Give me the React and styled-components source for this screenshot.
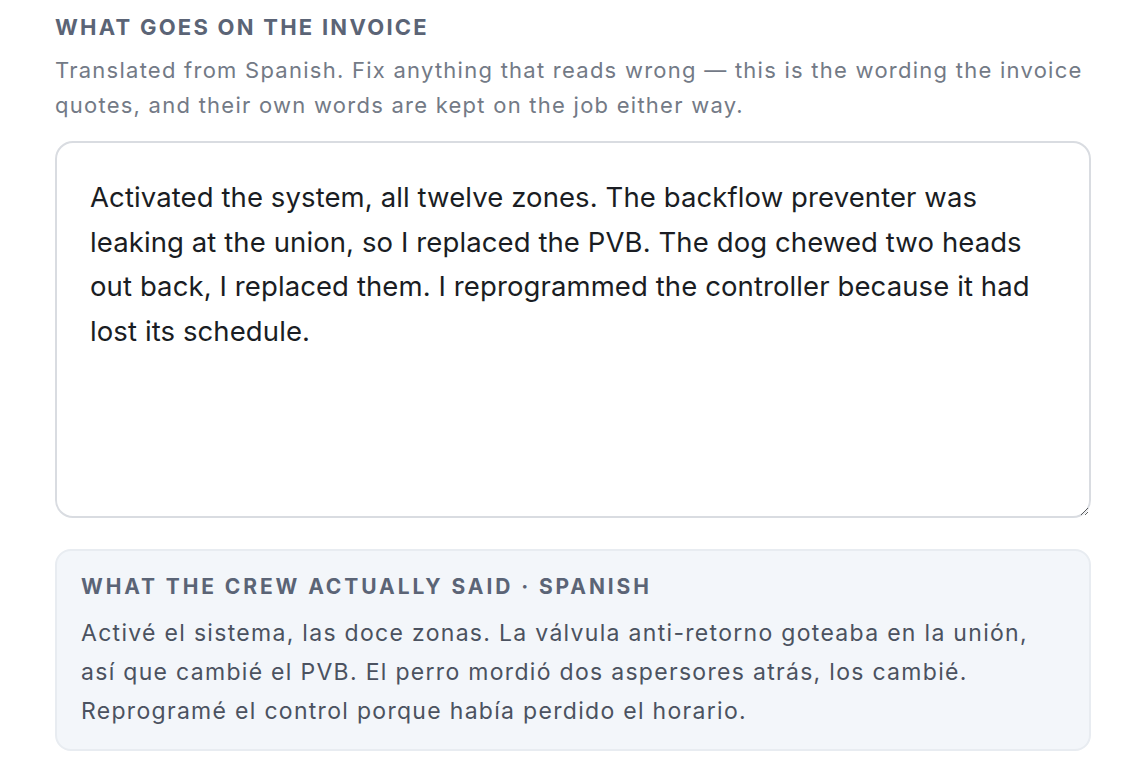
import React from "react";
import styled, { createGlobalStyle } from "styled-components";

const GlobalStyle = createGlobalStyle`
    html, body {
        margin:0;
        padding:0;
        background:#ffffff;
        font-family:Inter, "Noto Sans", sans-serif;
    }
    * { box-sizing:border-box; }
`;

const Page = styled.div`
    width:1140px;
    padding:13px 49px 0 55px;
    display:flex;
    flex-direction:column;
`;

const Label = styled.h3`
    margin:0;
    font-size:${props => props.small ? "21px" : "22px"};
    font-weight:700;
    letter-spacing:${props => props.small ? "2.9px" : "2.25px"};
    text-transform:uppercase;
    color:#5b6476;
    line-height:28px;
`;

const Hint = styled.p`
    margin:12px 0 0;
    font-size:22px;
    letter-spacing:1.25px;
    line-height:35px;
    color:#737a86;
    max-width:1036px;
`;

const Editor = styled.textarea`
    display:block;
    margin-top:18px;
    width:1036px;
    height:377px;
    padding:32px 33px 30px;
    border:2px solid #d9dce1;
    border-radius:18px;
    font-family:Inter, "Noto Sans", sans-serif;
    font-size:27.5px;
    letter-spacing:0.1px;
    line-height:44.5px;
    color:#1a1d23;
    background:#fff;
    outline:none;
    resize:vertical;
`;

const Original = styled.section`
    margin-top:31px;
    width:1036px;
    padding:22px 24px 18px;
    background:#f3f6fa;
    border:2px solid #e8ecf1;
    border-radius:16px;
`;

const OriginalText = styled.p`
    margin:13px 0 0;
    font-size:23px;
    letter-spacing:1.3px;
    line-height:39px;
    color:#4b5260;
`;

const invoiceText =
    "Activated the system, all twelve zones. The backflow preventer was leaking at the union, so I replaced the PVB. The dog chewed two heads out back, I replaced them. I reprogrammed the controller because it had lost its schedule.";

export default function App() {
    return (
        <>
            <GlobalStyle />
            <Page>
                <Label>What goes on the invoice</Label>
                <Hint>
                    Translated from Spanish. Fix anything that reads wrong — this is the wording the invoice quotes, and their own words are kept on the job either way.
                </Hint>
                <Editor defaultValue={invoiceText} spellCheck={false} />
                <Original>
                    <Label small>What the crew actually said · Spanish</Label>
                    <OriginalText>
                        Activé el sistema, las doce zonas. La válvula anti-retorno goteaba en la unión, así que cambié el PVB. El perro mordió dos aspersores atrás, los cambié. Reprogramé el control porque había perdido el horario.
                    </OriginalText>
                </Original>
            </Page>
        </>
    );
}
